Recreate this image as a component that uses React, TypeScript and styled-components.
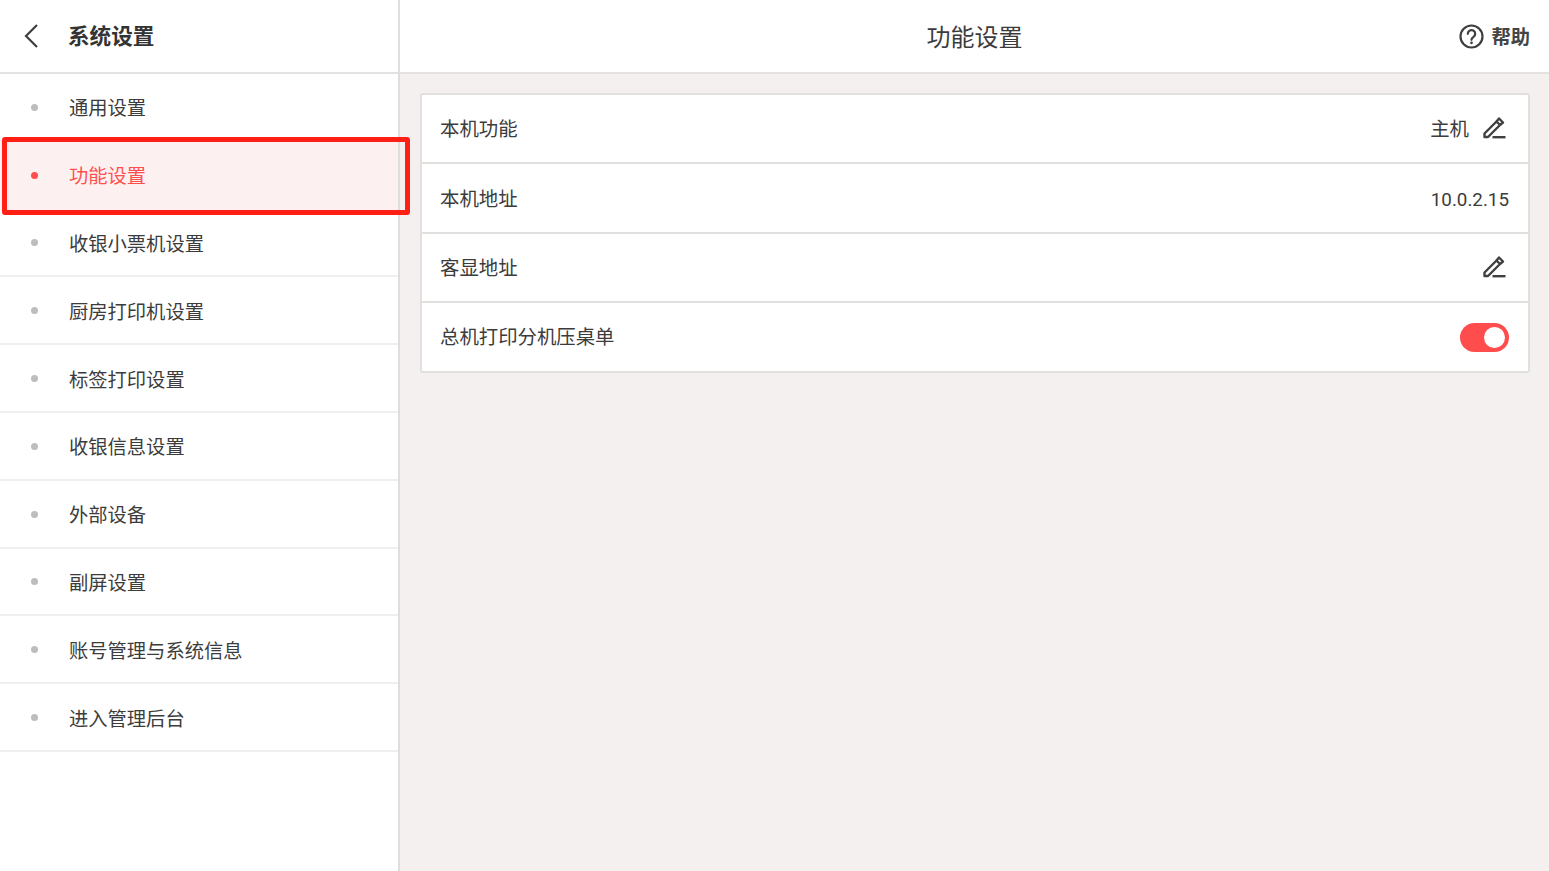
import styled, { createGlobalStyle } from "styled-components";

const menuItems = [
  "通用设置",
  "功能设置",
  "收银小票机设置",
  "厨房打印机设置",
  "标签打印设置",
  "收银信息设置",
  "外部设备",
  "副屏设置",
  "账号管理与系统信息",
  "进入管理后台",
];

const GlobalStyle = createGlobalStyle`
  html, body {
    margin: 0;
    padding: 0;
    background: #fff;
  }
  body {
    font-family: Roboto, "Noto Sans CJK SC", sans-serif;
    color: #3c3c3c;
  }
  * {
    box-sizing: border-box;
  }
`;

const Page = styled.div`
  display: flex;
  width: 1549px;
  height: 871px;
  overflow: hidden;
`;

const Sidebar = styled.aside`
  position: relative;
  flex: 0 0 400px;
  border-right: 2px solid #e0dedd;
  background: #fff;
`;

const SidebarHeader = styled.div`
  display: flex;
  align-items: center;
  height: 74px;
  padding-left: 22px;
  border-bottom: 2px solid #e3e2e1;
`;

const BackIcon = styled.svg`
  width: 18px;
  height: 26px;
  margin-right: 28px;
  fill: none;
  stroke: #3f3f3f;
  stroke-width: 2.2;
`;

const SidebarTitle = styled.h1`
  margin: 0;
  padding-top: 2px;
  font-size: 21.6px;
  line-height: 28px;
  font-weight: 700;
  color: #333;
`;

const MenuList = styled.ul`
  margin: 0;
  padding: 0;
  list-style: none;
`;

const MenuRow = styled.li<{ $active?: boolean }>`
  display: flex;
  align-items: center;
  height: 67.8px;
  padding-left: 31px;
  padding-top: 1px;
  border-bottom: 2px solid ${(p) => (p.$active ? "#fdf0f0" : "#f0efef")};
  background: ${(p) => (p.$active ? "#fdf0f0" : "#fff")};
  color: ${(p) => (p.$active ? "#ff5050" : "#3c3c3c")};
  font-size: 19.3px;
`;

const Dot = styled.span<{ $active?: boolean }>`
  width: 7px;
  height: 7px;
  margin-right: 31px;
  border-radius: 50%;
  background: ${(p) => (p.$active ? "#ff4c4c" : "#bdbdbd")};
`;

const Highlight = styled.div`
  position: absolute;
  left: 2px;
  top: 137px;
  width: 408px;
  height: 78px;
  border: 5px solid #ff1f14;
  border-radius: 3px;
  z-index: 2;
`;

const Main = styled.main`
  flex: 1;
  display: flex;
  flex-direction: column;
  background: #f4f0ef;
`;

const TopBar = styled.header`
  position: relative;
  display: flex;
  align-items: center;
  justify-content: center;
  height: 74px;
  padding-bottom: 2px;
  background: #fff;
  border-bottom: 2px solid #e3e2e1;
`;

const TopTitle = styled.h2`
  margin: 0;
  font-size: 24px;
  font-weight: 400;
  color: #3c3c3c;
`;

const HelpLink = styled.div`
  position: absolute;
  right: 19px;
  top: 0;
  height: 72px;
  display: flex;
  align-items: center;
  gap: 7px;
  font-size: 19.3px;
  font-weight: 700;
  color: #444;
`;

const SettingsCard = styled.section`
  margin: 19px 19px 0 20px;
  background: #fff;
  border: 2px solid #e2e0df;
  border-radius: 3px;
`;

const SettingRow = styled.div`
  display: flex;
  align-items: center;
  justify-content: space-between;
  height: 69.4px;
  padding: 0 19px 0 18px;
  border-bottom: 2px solid #e2e0df;
  font-size: 19.4px;
  color: #3c3c3c;
  &:last-child {
    height: 67.4px;
    border-bottom: none;
  }
`;

const RowText = styled.span`
  display: block;
  padding-bottom: 2px;
`;

const RowValue = styled.div`
  display: flex;
  align-items: center;
  gap: 13px;
`;

const IpValue = styled.span`
  padding-top: 4px;
  font-size: 18.8px;
`;

const EditGlyph = styled.svg`
  width: 24px;
  height: 24px;
  margin: 0 3px 1px 0;
  fill: none;
  stroke: #404040;
  stroke-width: 2.4;
  stroke-linejoin: round;
`;

const Toggle = styled.div`
  display: flex;
  align-items: center;
  justify-content: flex-end;
  width: 49px;
  height: 29px;
  margin-top: 2px;
  padding-right: 4px;
  border-radius: 15px;
  background: #ff4d4d;
`;

const ToggleKnob = styled.span`
  width: 21px;
  height: 21px;
  border-radius: 50%;
  background: #fff;
`;

const EditIcon = () => (
  <EditGlyph viewBox="0 0 24 24">
    <path d="M2.500 17.500 14.500 5.500l3.500 3.500L6 21H2.500z" />
    <path d="m14.500 5.500 2.500-3 4 4-3 2.500" />
    <path d="M10.500 21.200h13" />
  </EditGlyph>
);

const HelpIcon = () => (
  <svg width="25" height="25" viewBox="0 0 25 25" fill="none" stroke="#3f3f3f" strokeWidth="2.200">
    <circle cx="12.500" cy="12.500" r="11" />
    <path d="M8.800 9.800a3.700 3.700 0 1 1 5.800 3c-1.300.9-2.100 1.500-2.100 3" strokeLinecap="round" />
    <circle cx="12.500" cy="18.800" r="1.400" fill="#3f3f3f" stroke="none" />
  </svg>
);

const App = () => {
  return (
    <>
      <GlobalStyle />
      <Page>
        <Sidebar>
          <SidebarHeader>
            <BackIcon viewBox="0 0 18 26">
              <path d="M15 2 4 13l11 11" />
            </BackIcon>
            <SidebarTitle>系统设置</SidebarTitle>
          </SidebarHeader>
          <MenuList>
            {menuItems.map((item, index) => (
              <MenuRow key={item} $active={index === 1}>
                <Dot $active={index === 1} />
                {item}
              </MenuRow>
            ))}
          </MenuList>
          <Highlight />
        </Sidebar>
        <Main>
          <TopBar>
            <TopTitle>功能设置</TopTitle>
            <HelpLink>
              <HelpIcon />
              帮助
            </HelpLink>
          </TopBar>
          <SettingsCard>
            <SettingRow>
              <RowText>本机功能</RowText>
              <RowValue>
                <RowText>主机</RowText>
                <EditIcon />
              </RowValue>
            </SettingRow>
            <SettingRow>
              <RowText>本机地址</RowText>
              <IpValue>10.0.2.15</IpValue>
            </SettingRow>
            <SettingRow>
              <RowText>客显地址</RowText>
              <EditIcon />
            </SettingRow>
            <SettingRow>
              <RowText>总机打印分机压桌单</RowText>
              <Toggle>
                <ToggleKnob />
              </Toggle>
            </SettingRow>
          </SettingsCard>
        </Main>
      </Page>
    </>
  );
};

export default App;
